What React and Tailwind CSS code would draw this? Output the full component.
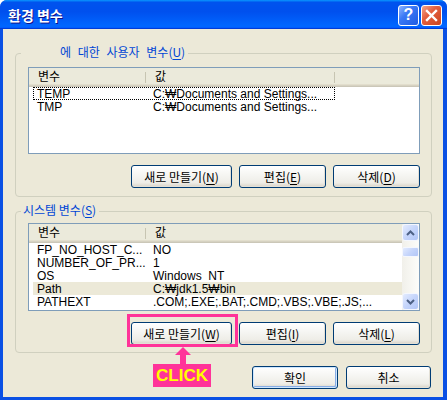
import React from "react";

const U = ({ children }) => <span className="underline underline-offset-[2px]">{children}</span>;

function Btn({ children, w, def }) {
  return (
    <div
      className={`${w} h-[23px] shrink-0 flex items-center justify-center rounded-[3px] border border-[#003C74] text-[12px] leading-none text-black bg-[linear-gradient(180deg,#FFFFFF_0%,#F6F6F3_40%,#EEEDE7_80%,#D8D2C6_100%)] ${
        def
          ? "shadow-[inset_0_0_0_1px_#CEE7FF,inset_-1px_-1px_0_1px_#89ADE4]"
          : "shadow-[inset_-1px_-1px_0_0_#E3E0D6]"
      }`}
    >
      <span className="font-['Noto_Sans_CJK_KR','Liberation_Sans',sans-serif]">{children}</span>
    </div>
  );
}

function GroupBox({ label, labelPad, h, children, extra }) {
  return (
    <div className={`relative ${h} shrink-0 rounded-[4px] border border-[#D0D0BF] ${extra}`}>
      <div
        className={`absolute left-[5px] top-[-9px] h-[14px] leading-[14px] bg-[#ECE9D8] pr-[3px] ${labelPad} text-[12px] text-[#0046D5] font-['Noto_Sans_CJK_KR','Liberation_Sans',sans-serif]`}
      >
        {label}
      </div>
      {children}
    </div>
  );
}

function Header({ col2, fill }) {
  return (
    <div className="flex h-[19px] shrink-0 bg-[#EBEADB] shadow-[inset_0_-1px_0_#CBC7B8,inset_0_-2px_0_#D6D2C2,inset_0_-3px_0_#E2DECD] text-[12px] font-['Noto_Sans_CJK_KR','Liberation_Sans',sans-serif]">
      <div className="relative w-[117px] pl-[9px] pb-[3px] flex items-center">
        변수
        <span className="absolute right-0 top-[4px] h-[11px] w-px bg-[#C7C5B2]" />
      </div>
      <div className={`relative ${col2} pl-[9px] pb-[3px] flex items-center`}>
        값
        {fill ? null : <span className="absolute right-0 top-[4px] h-[11px] w-px bg-[#C7C5B2]" />}
      </div>
      {fill ? null : <div className="flex-1" />}
    </div>
  );
}

function Row({ a, b, sel, focus }) {
  return (
    <div
      className={`flex h-[13px] leading-[13px] ml-[4px] text-[12px] text-black whitespace-nowrap ${
        sel ? "bg-[#ECE9D8]" : ""
      } ${focus ? "outline outline-1 outline-dotted outline-black -outline-offset-1 w-[302px]" : ""}`}
    >
      <div className="w-[113px] shrink-0 pl-[4px] pt-[1px]">{a}</div>
      <div className="pl-[7px] pt-[1px]">{b}</div>
    </div>
  );
}

function ScrollBtn({ up }) {
  return (
    <div className="w-[17px] h-[17px] shrink-0 rounded-[3px] border border-[#F4F7FE] bg-[linear-gradient(135deg,#E3EBFE_0%,#C5D5FB_50%,#B2C6F7_100%)] flex items-center justify-center">
      <svg width="9" height="6" viewBox="0 0 9 6">
        {up ? (
          <path d="M1 5 L4.5 1.5 L8 5" fill="none" stroke="#4D6185" strokeWidth="2" />
        ) : (
          <path d="M1 1 L4.5 4.5 L8 1" fill="none" stroke="#4D6185" strokeWidth="2" />
        )}
      </svg>
    </div>
  );
}

export default function App() {
  return (
    <div className="relative w-[447px] h-[400px] rounded-t-[7px] bg-[#0A50E4] flex flex-col font-['Liberation_Sans','Noto_Sans_CJK_KR',sans-serif]">
      {/* Title bar */}
      <div className="h-[29px] shrink-0 rounded-t-[7px] bg-[linear-gradient(180deg,#0997FF,#0053EE_8%,#0050EE_40%,#0066FF_88%,#0066FF_93%,#005BFF_95%,#003DD7_96%,#003DD7)] flex items-center pl-[8px] pr-[5px]">
        <span className="text-white font-bold text-[14px] leading-none [text-shadow:1px_1px_#0F1089] font-['Noto_Sans_CJK_KR',sans-serif]">
          환경 변수
        </span>
        <div className="ml-auto mt-[1px] flex gap-[2px]">
          <div className="w-[21px] h-[21px] rounded-[3px] border border-white bg-[linear-gradient(135deg,#8FB6FF_0%,#3A78F5_40%,#1F5BE3_100%)] flex items-center justify-center text-white font-bold text-[16px] leading-none font-['Liberation_Sans',sans-serif]">
            ?
          </div>
          <div className="w-[21px] h-[21px] rounded-[3px] border border-white bg-[linear-gradient(135deg,#F3A68D_0%,#E35F3F_40%,#CC4520_100%)] flex items-center justify-center">
            <svg width="13" height="13" viewBox="0 0 13 13">
              <path d="M2 2 L11 11 M11 2 L2 11" stroke="white" strokeWidth="2.4" strokeLinecap="square" />
            </svg>
          </div>
        </div>
      </div>

      {/* Body */}
      <div className="flex-1 ml-[3px] mr-[4px] mb-[3px] bg-[#ECE9D8] pl-[12px] pr-[11px] pt-[24px] pb-[8px] flex flex-col">
        <GroupBox
          h="h-[144px]"
          labelPad="pl-[39px] [word-spacing:4px]"
          label={
            <>
              에 대한 사용자 변수(<U>U</U>)
            </>
          }
          extra="pl-[12px] pr-[11px] pt-[13px]"
        >
          <div className="h-[87px] border border-[#7F9DB9] bg-white flex flex-col">
            <Header col2="w-[189px]" />
            <Row a="TEMP" b="C:₩Documents and Settings..." focus />
            <Row a="TMP" b="C:₩Documents and Settings..." />
          </div>
          <div className="mt-[11px] flex justify-end gap-[7px]">
            <Btn w="w-[101px]">
              새로 만들기(<U>N</U>)
            </Btn>
            <Btn w="w-[87px]">
              편집(<U>E</U>)
            </Btn>
            <Btn w="w-[87px]">
              삭제(<U>D</U>)
            </Btn>
          </div>
        </GroupBox>

        <GroupBox
          h="h-[142px]"
          labelPad="pl-[2px]"
          label={
            <>
              시스템 변수(<U>S</U>)
            </>
          }
          extra="mt-[14px] pl-[12px] pr-[11px] pt-[11px]"
        >
          <div className="h-[88px] border border-[#7F9DB9] bg-white flex">
            <div className="flex-1 min-w-0 flex flex-col">
              <Header col2="flex-1" fill />
              <Row a="FP_NO_HOST_C..." b="NO" />
              <Row a="NUMBER_OF_PR..." b="1" />
              <Row a="OS" b="Windows_NT" />
              <Row a="Path" b="C:₩jdk1.5₩bin" sel />
              <Row a="PATHEXT" b=".COM;.EXE;.BAT;.CMD;.VBS;.VBE;.JS;..." />
            </div>
            <div className="w-[17px] shrink-0 flex flex-col bg-[linear-gradient(90deg,#F1F0EA,#FDFDFA)]">
              <ScrollBtn up />
              <div className="h-[6px] shrink-0" />
              <div className="w-[17px] h-[10px] shrink-0 rounded-[2px] border border-[#F4F7FE] bg-[linear-gradient(135deg,#E3EBFE_0%,#C5D5FB_50%,#B2C6F7_100%)]" />
              <div className="flex-1" />
              <ScrollBtn />
            </div>
          </div>
          <div className="mt-[11px] flex justify-end gap-[7px]">
            <Btn w="w-[101px]">
              새로 만들기(<U>W</U>)
            </Btn>
            <Btn w="w-[87px]">
              편집(<U>I</U>)
            </Btn>
            <Btn w="w-[87px]">
              삭제(<U>L</U>)
            </Btn>
          </div>
        </GroupBox>

        <div className="mt-[13px] flex justify-end gap-[8px] pr-[1px]">
          <Btn w="w-[86px]" def>
            확인
          </Btn>
          <Btn w="w-[85px]">취소</Btn>
        </div>
      </div>

      {/* CLICK annotation overlay */}
      <div className="absolute left-[127px] top-[314px] w-[111px] h-[33px] border-[3px] border-[#FF3399]" />
      <svg className="absolute left-[175px] top-[347px]" width="16" height="17" viewBox="0 0 16 17">
        <polygon points="8,0 16,8 11,8 11,17 5,17 5,8 0,8" fill="#FF3399" />
      </svg>
      <div className="absolute left-[153px] top-[364px] w-[58px] h-[23px] bg-[#FF3399] flex items-center justify-center text-[#FFFF00] font-bold text-[17px] leading-none font-['Liberation_Sans',sans-serif]">
        CLICK
      </div>
    </div>
  );
}
